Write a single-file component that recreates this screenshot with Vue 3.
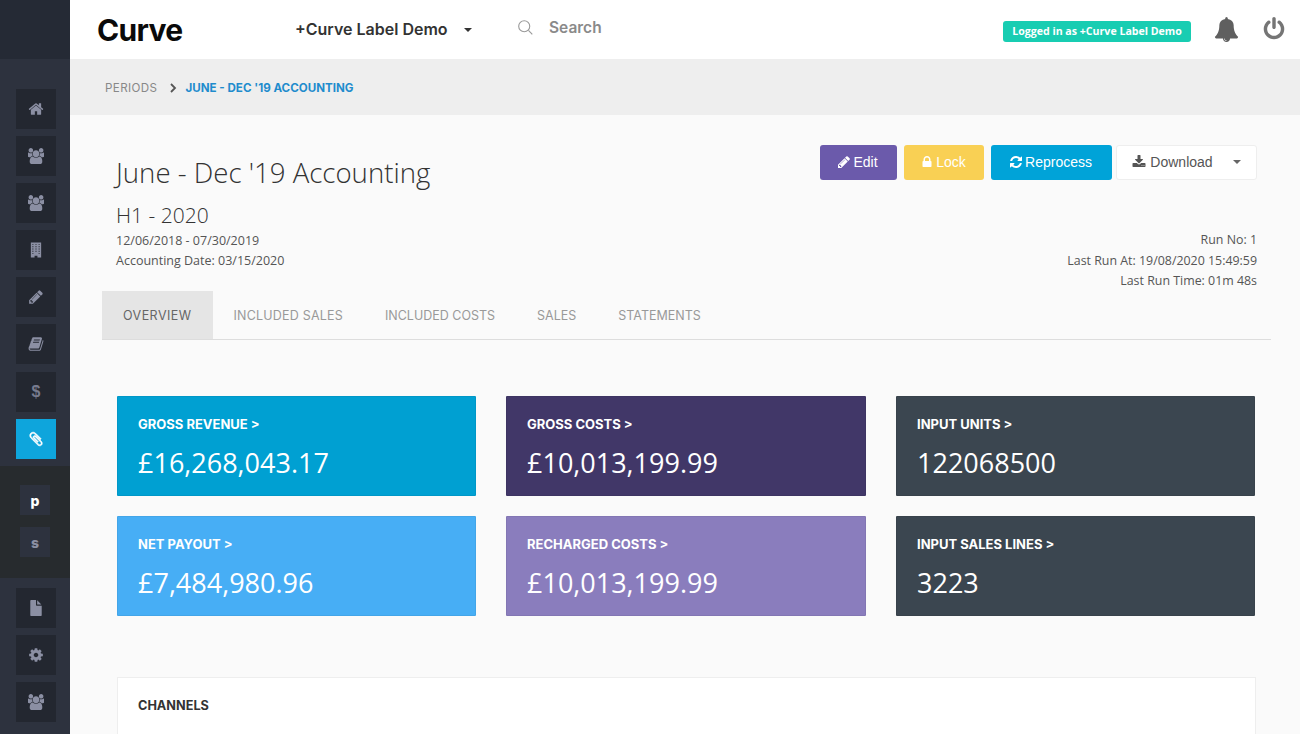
<script setup>
const icons = {
  home: 'M1472 992v480q0 26-19 45t-45 19h-384v-384h-256v384h-384q-26 0-45-19t-19-45v-480q0-1 .5-3t.5-3l575-474 575 474q1 2 1 6zm223-69l-62 74q-8 9-21 11h-3q-13 0-21-7l-692-577-692 577q-12 8-24 7-13-2-21-11l-62-74q-8-10-7-23.500t11-21.500l719-599q32-26 76-26t76 26l244 204v-195q0-14 9-23t23-9h192q14 0 23 9t9 23v408l219 182q10 8 11 21.500t-7 23.500z',
  users: 'M529 896q-162 5-265 128h-134q-82 0-138-40.500t-56-118.500q0-353 124-353 6 0 43.500 21t97.500 42.500 119 21.500q67 0 133-23-5 37-5 66 0 139 81 256zm1071 637q0 120-73 189.500t-194 69.500h-874q-121 0-194-69.500t-73-189.500q0-53 3.500-103.500t14-109 26.500-108.500 43-97.500 62-81 85.500-53.500 111.500-20q10 0 43 21.500t73 48 107 48 135 21.500 135-21.500 107-48 73-48 43-21.500q61 0 111.500 20t85.500 53.500 62 81 43 97.500 26.500 108.500 14 109 3.500 103.500zm-1024-1277q0 106-75 181t-181 75-181-75-75-181 75-181 181-75 181 75 75 181zm704 384q0 159-112.500 271.500t-271.500 112.500-271.500-112.500-112.500-271.500 112.500-271.500 271.500-112.500 271.500 112.500 112.500 271.500zm576 225q0 78-56 118.500t-138 40.500h-134q-103-123-265-128 81-117 81-256 0-29-5-66 66 23 133 23 59 0 119-21.500t97.500-42.500 43.500-21q124 0 124 353zm-128-609q0 106-75 181t-181 75-181-75-75-181 75-181 181-75 181 75 75 181z',
  building: 'M320 64h1152v1664h-416v-192h-320v192h-416zM480 224v96h128v-96zM832 224v96h128v-96zM1184 224v96h128v-96zM480 480v96h128v-96zM832 480v96h128v-96zM1184 480v96h128v-96zM480 736v96h128v-96zM832 736v96h128v-96zM1184 736v96h128v-96zM480 992v96h128v-96zM832 992v96h128v-96zM1184 992v96h128v-96zM480 1248v96h128v-96zM1184 1248v96h128v-96z',
  pencil: 'M491 1536l91-91-235-235-91 91v107h128v128h107zm523-928q0-22-22-22-10 0-17 7l-542 542q-7 7-7 17 0 22 22 22 10 0 17-7l542-542q7-7 7-17zm-54-192l416 416-832 832h-416v-416zm683 96q0 53-37 90l-166 166-416-416 166-165q36-38 90-38 53 0 91 38l235 234q37 39 37 91z',
  book: 'M1703 478q40 57 18 129l-275 906q-19 64-76.500 107.500t-122.500 43.500h-923q-77 0-148.500-53.500t-99.500-131.500q-24-67-2-127 0-4 3-27t4-37q1-8-3-21.500t-3-19.500q2-11 8-21t16.500-23.500 16.500-23.500q23-38 45-91.500t30-91.500q3-10 .5-30t-.5-28q3-11 17-28t17-23q21-36 42-92t25-90q1-9-2.500-32t.5-28q4-13 22-30.500t22-22.500q19-26 42.500-84.500t27.500-96.500q1-8-3-25.500t-2-26.500q2-8 9-18t18-23 17-21q8-12 16.500-30.500t15-35 16-36 19.500-32 26.500-23.500 36-11.500 47.500 5.500l-1 3q38-9 51-9h761q74 0 114 56t18 130l-274 906q-36 119-71.500 153.500t-128.500 34.500h-869q-27 0-38 15-11 16-1 43 24 70 144 70h923q29 0 56-15.500t35-41.500l300-987q7-22 5-57 38 15 59 43zm-1064 2q-4 13 2 22.500t20 9.500h608q13 0 25.500-9.500t16.500-22.500l21-64q4-13-2-22.500t-20-9.500h-608q-13 0-25.500 9.500t-16.500 22.500zm-83 256q-4 13 2 22.500t20 9.500h608q13 0 25.500-9.500t16.500-22.500l21-64q4-13-2-22.500t-20-9.500h-608q-13 0-25.500 9.500t-16.500 22.500z',
  clip: 'M1596 1385q0 117-79 196t-196 79q-135 0-235-100l-777-776q-113-115-113-271 0-159 110-270t269-111q158 0 273 113l605 606q10 10 10 22 0 16-30.500 46.500t-46.500 30.500q-13 0-23-10l-606-607q-79-77-181-77-106 0-179 75t-73 181q0 105 76 181l776 777q63 63 145 63 64 0 106-42t42-106q0-82-63-145l-581-581q-26-24-60-24-29 0-48 19t-19 48q0 32 25 59l410 410q10 10 10 22 0 16-31 47t-47 31q-12 0-22-10l-410-410q-63-61-63-149 0-82 57-139t139-57q88 0 149 63l581 581q100 98 100 235z',
  file: 'M1468 476q14 14 28 36h-472v-472q22 14 36 28zm-476 164h544v1056q0 40-28 68t-68 28h-1088q-40 0-68-28t-28-68v-1600q0-40 28-68t68-28h544v544q0 40 28 68t68 28z',
  cog: 'M1152 896q0-106-75-181t-181-75-181 75-75 181 75 181 181 75 181-75 75-181zm512-109v222q0 12-8 23t-20 13l-185 28q-19 54-39 91 35 50 107 138 10 12 10 25t-9 23q-27 37-99 108t-94 71q-12 0-26-9l-138-108q-44 23-91 38-16 136-29 186-7 28-36 28h-222q-14 0-24.500-8.500t-11.500-21.500l-28-184q-49-16-90-37l-141 107q-10 9-25 9-14 0-25-11-126-114-165-168-7-10-7-23 0-12 8-23 15-21 51-66.500t54-70.500q-27-50-41-99l-183-27q-13-2-21-12.500t-8-23.500v-222q0-12 8-23t19-13l186-28q14-46 39-92-40-57-107-138-10-12-10-24 0-10 9-23 26-36 98.500-107.500t94.500-71.500q13 0 26 10l138 107q44-23 91-38 16-136 29-186 7-28 36-28h222q14 0 24.500 8.500t11.500 21.500l28 184q49 16 90 37l142-107q9-9 24-9 13 0 25 10 129 119 165 170 7 8 7 22 0 12-8 23-15 21-51 66.500t-54 70.500q26 50 41 98l183 28q13 2 21 12.500t8 23.500z',
  lock: 'M640 768h512v-192q0-106-75-181t-181-75-181 75-75 181v192zm832 96v576q0 40-28 68t-68 28h-960q-40 0-68-28t-28-68v-576q0-40 28-68t68-28h32v-192q0-184 132-316t316-132 316 132 132 316v192h32q40 0 68 28t28 68z',
  refresh: 'M1639 1056q0 5-1 7-64 268-268 434.500t-478 166.500q-146 0-282.500-55t-243.500-157l-129 129q-19 19-45 19t-45-19-19-45v-448q0-26 19-45t45-19h448q26 0 45 19t19 45-19 45l-137 137q71 66 161 102t187 36q134 0 250-65t186-179q11-17 53-117 8-23 30-23h192q13 0 22.500 9.500t9.500 22.500zm25-800v448q0 26-19 45t-45 19h-448q-26 0-45-19t-19-45 19-45l138-138q-148-137-349-137-134 0-250 65t-186 179q-11 17-53 117-8 23-30 23h-199q-13 0-22.500-9.500t-9.500-22.500v-7q65-268 270-434.500t480-166.500q146 0 284 55.500t245 156.500l130-129q19-19 45-19t45 19 19 45z',
  download: 'M1344 1344q0-26-19-45t-45-19-45 19-19 45 19 45 45 19 45-19 19-45zm256 0q0-26-19-45t-45-19-45 19-19 45 19 45 45 19 45-19 19-45zm128-224v320q0 40-28 68t-68 28h-1472q-40 0-68-28t-28-68v-320q0-40 28-68t68-28h465l135 136q58 56 136 56t136-56l136-136h464q40 0 68 28t28 68zm-325-569q17 41-14 70l-448 448q-18 19-45 19t-45-19l-448-448q-31-29-14-70 17-39 59-39h256v-448q0-26 19-45t45-19h256q26 0 45 19t19 45v448h256q42 0 59 39z',
  bell: 'M912 1696q0-16-16-16-59 0-101.500-42.500t-42.500-101.500q0-16-16-16t-16 16q0 73 51.500 124.500t124.500 51.500q16 0 16-16zm816-288q0 52-38 90t-90 38h-448q0 106-75 181t-181 75-181-75-75-181h-448q-52 0-90-38t-38-90q50-42 91-88t85-119.500 74.500-158.500 50-206 19.500-260q0-152 117-282.500t307-158.500q-8-19-8-39 0-40 28-68t68-28 68 28 28 68q0 20-8 39 190 28 307 158.500t117 282.500q0 139 19.500 260t50 206 74.500 158.500 85 119.500 91 88z',
  power: 'M1664 896q0 156-61 298t-164 245-245 164-298 61-298-61-245-164-164-245-61-298q0-182 80.500-343t226.500-270q43-32 95.500-25t83.500 50q32 42 24.500 94.500t-49.500 84.500q-98 74-151.500 181t-53.500 228q0 104 40.500 198.500t109.500 163.500 163.500 109.500 198.500 40.500 198.500-40.500 163.500-109.500 109.500-163.500 40.500-198.500q0-121-53.500-228t-151.500-181q-42-32-49.500-84.500t24.500-94.500q31-43 84-50t95 25q146 109 226.500 270t80.500 343zm-640-768v640q0 52-38 90t-90 38-90-38-38-90v-640q0-52 38-90t90-38 90 38 38 90z'
}

const navTop = ['home', 'users', 'users', 'building', 'pencil', 'book', 'dollar', 'clip']
const navBottom = ['file', 'cog', 'users']
const tabs = ['Overview', 'Included Sales', 'Included Costs', 'Sales', 'Statements']
const cards = [
  { label: 'GROSS REVENUE >', value: '£16,268,043.17', color: '#00a0d2' },
  { label: 'GROSS COSTS >', value: '£10,013,199.99', color: '#413768' },
  { label: 'INPUT UNITS >', value: '122068500', color: '#3b4650' },
  { label: 'NET PAYOUT >', value: '£7,484,980.96', color: '#47aef5' },
  { label: 'RECHARGED COSTS >', value: '£10,013,199.99', color: '#8a7dbd' },
  { label: 'INPUT SALES LINES >', value: '3223', color: '#3b4650' }
]
</script>

<template>
  <div class="app">
    <aside class="sidebar">
      <div class="side-top"></div>
      <nav class="nav nav-main">
        <a v-for="(item, i) in navTop" :key="i" class="nav-item" :class="{ active: item === 'clip' }">
          <span v-if="item === 'dollar'" class="dollar">$</span>
          <svg v-else class="nav-icon" viewBox="0 0 1792 1792"><path fill-rule="evenodd" :d="icons[item]" /></svg>
        </a>
      </nav>
      <div class="sub-nav">
        <a class="sub-item current">p</a>
        <a class="sub-item">s</a>
      </div>
      <nav class="nav nav-bottom">
        <a v-for="(item, i) in navBottom" :key="i" class="nav-item">
          <svg class="nav-icon" viewBox="0 0 1792 1792"><path :d="icons[item]" /></svg>
        </a>
      </nav>
    </aside>

    <div class="main">
      <header class="topbar">
        <div class="logo">Curve</div>
        <div class="label-select">+Curve Label Demo <span class="caret dark"></span></div>
        <div class="search">
          <svg viewBox="0 0 20 20" class="search-icon"><circle cx="8.500" cy="8.500" r="6.500" /><line x1="13.500" y1="13.500" x2="18" y2="18" /></svg>
          <span>Search</span>
        </div>
        <div class="top-right">
          <span class="badge">Logged in as +Curve Label Demo</span>
          <svg class="bell" viewBox="0 0 1792 1792"><path :d="icons.bell" /></svg>
          <svg class="power" viewBox="0 0 1792 1792"><path :d="icons.power" /></svg>
        </div>
      </header>

      <div class="crumbs">
        <span class="crumb">PERIODS</span>
        <svg class="crumb-sep" viewBox="0 0 8 10"><path d="M2 1l4 4-4 4" /></svg>
        <span class="crumb current">JUNE - DEC '19 ACCOUNTING</span>
      </div>

      <main class="content">
        <section class="head">
          <div class="head-left">
            <h1>June - Dec '19 Accounting</h1>
            <h2>H1 - 2020</h2>
            <p>12/06/2018 - 07/30/2019</p>
            <p>Accounting Date: 03/15/2020</p>
          </div>
          <div class="head-right">
            <div class="actions">
              <button class="btn edit"><svg viewBox="0 0 1792 1792"><path :d="icons.pencil" /></svg> Edit</button>
              <button class="btn lock"><svg viewBox="0 0 1792 1792"><path :d="icons.lock" /></svg> Lock</button>
              <button class="btn reprocess"><svg viewBox="0 0 1792 1792"><path :d="icons.refresh" /></svg> Reprocess</button>
              <button class="btn download"><svg viewBox="0 0 1792 1792"><path :d="icons.download" /></svg> Download <span class="caret"></span></button>
            </div>
            <div class="run-info">
              <p>Run No: 1</p>
              <p>Last Run At: 19/08/2020 15:49:59</p>
              <p>Last Run Time: 01m 48s</p>
            </div>
          </div>
        </section>

        <div class="tabs">
          <a v-for="(tab, i) in tabs" :key="tab" class="tab" :class="{ active: i === 0 }">{{ tab }}</a>
        </div>

        <section class="cards">
          <div v-for="card in cards" :key="card.label" class="card" :style="{ background: card.color }">
            <div class="card-label">{{ card.label }}</div>
            <div class="card-value">{{ card.value }}</div>
          </div>
        </section>

        <section class="channels">
          <h3>CHANNELS</h3>
        </section>
      </main>
    </div>
  </div>
</template>

<style scoped>
.app {
  display: flex;
  height: 734px;
  overflow: hidden;
  font-family: "Open Sans", sans-serif;
}

.sidebar {
  width: 70px;
  flex-shrink: 0;
  background: #2d323e;
  display: flex;
  flex-direction: column;
}

.side-top {
  height: 59px;
  background: #252a35;
}

.nav {
  display: flex;
  flex-direction: column;
  gap: 7px;
  padding-left: 16px;
}

.nav-main {
  padding-top: 30px;
  padding-bottom: 7px;
}

.nav-main .nav-item:nth-child(7) {
  margin-top: 1px;
}

.nav-bottom {
  padding-top: 10px;
}

.nav-item {
  width: 40px;
  height: 40px;
  background: #232730;
  display: flex;
  align-items: center;
  justify-content: center;
}

.nav-item.active {
  background: #0ea5dc;
}

.nav-icon {
  width: 16px;
  height: 16px;
  fill: #8b8fa3;
}

.nav-item.active .nav-icon {
  fill: #fff;
  stroke: #fff;
  stroke-width: 70;
}

.dollar {
  color: #777b8e;
  font-family: "Liberation Sans", sans-serif;
  font-size: 16px;
  font-weight: 700;
}

.sub-nav {
  height: 112px;
  background: #272b2e;
  display: flex;
  flex-direction: column;
  gap: 12px;
  padding: 19px 0 0 20px;
  box-sizing: border-box;
}

.sub-item {
  width: 30px;
  height: 30px;
  background: #2d323e;
  color: #8b8fa3;
  font-family: "Inter", sans-serif;
  font-size: 14px;
  font-weight: 800;
  display: flex;
  align-items: center;
  justify-content: center;
}

.sub-item.current {
  color: #fff;
}

.main {
  flex: 1;
  min-width: 0;
  display: flex;
  flex-direction: column;
  background: #fafafa;
}

.topbar {
  height: 59px;
  flex-shrink: 0;
  background: #fff;
  display: flex;
  align-items: center;
  padding: 0 14px 0 27px;
  box-sizing: border-box;
}

.logo {
  width: 198px;
  font-family: "Inter", sans-serif;
  font-size: 30px;
  font-weight: 700;
  letter-spacing: -0.7px;
  color: #0a0a0a;
}

.label-select {
  width: 222px;
  padding-bottom: 2px;
  font-family: "Inter", sans-serif;
  font-size: 16px;
  font-weight: 600;
  color: #333;
}

.caret {
  display: inline-block;
  width: 0;
  height: 0;
  border-left: 4px solid transparent;
  border-right: 4px solid transparent;
  border-top: 4px solid #666;
  margin-left: 12px;
  vertical-align: middle;
}

.caret.dark {
  border-top-color: #333;
}

.search {
  display: flex;
  align-items: center;
  gap: 15px;
  padding-bottom: 4px;
  color: #8a8a8a;
  font-family: "Inter", sans-serif;
  font-size: 15.500px;
  font-weight: 600;
}

.search-icon {
  width: 17px;
  height: 17px;
  fill: none;
  stroke: #999;
  stroke-width: 1.300;
}

.top-right {
  margin-left: auto;
  display: flex;
  align-items: center;
}

.badge {
  background: #18cdb2;
  color: #fff;
  font-family: "Open Sans", sans-serif;
  font-size: 10.600px;
  font-weight: 700;
  height: 21px;
  line-height: 21px;
  width: 188px;
  text-align: center;
  border-radius: 3px;
  margin-top: 3px;
}

.bell {
  width: 25px;
  height: 25px;
  fill: #5f5f5f;
  margin-left: 23px;
}

.power {
  width: 24px;
  height: 24px;
  fill: #757575;
  margin-left: 23px;
  margin-bottom: 2px;
}

.crumbs {
  height: 56px;
  flex-shrink: 0;
  background: #eee;
  display: flex;
  align-items: center;
  padding: 2px 0 0 35px;
  box-sizing: border-box;
  font-family: "Inter", sans-serif;
  font-size: 11.600px;
}

.crumb {
  color: #888;
  font-weight: 400;
  letter-spacing: 0.4px;
}

.crumb.current {
  color: #1f8ccd;
  font-weight: 700;
  letter-spacing: 0;
}

.crumb-sep {
  width: 8px;
  height: 10px;
  margin: 0 8px 0 12px;
  fill: none;
  stroke: #555;
  stroke-width: 1.800;
}

.content {
  flex: 1;
  min-height: 0;
  padding: 0 29px 0 32px;
}

.head {
  display: flex;
  justify-content: space-between;
  height: 176px;
  box-sizing: border-box;
  padding: 30px 14px 0 13px;
}

.head-left {
  padding-left: 1px;
}

h1 {
  margin: 7px 0 0;
  font-size: 27.600px;
  font-weight: 300;
  line-height: 40px;
  color: #333;
}

h2 {
  margin: 9px 0 0;
  font-size: 21px;
  font-weight: 300;
  line-height: 28px;
  color: #333;
}

.head-left p {
  margin: 0;
  font-size: 12.500px;
  line-height: 20px;
  color: #555;
}

.head-left h2 + p {
  margin-top: 2px;
}

.head-right {
  display: flex;
  flex-direction: column;
  align-items: flex-end;
}

.actions {
  display: flex;
  gap: 7px;
}

.btn {
  height: 35px;
  border: none;
  border-radius: 3px;
  color: #fff;
  font-family: "Liberation Sans", sans-serif;
  font-size: 14px;
  padding: 0 2px 2px 0;
  display: flex;
  align-items: center;
  justify-content: center;
  gap: 2px;
}

.btn svg {
  width: 14px;
  height: 14px;
  fill: currentColor;
}

.edit {
  width: 77px;
  background: #6b5aab;
}

.lock {
  width: 80px;
  background: #f9d054;
}

.reprocess {
  width: 121px;
  background: #00a3d8;
}

.download {
  width: 141px;
  margin-left: -3px;
  padding-right: 0;
  gap: 4px;
  background: #fff;
  color: #555;
  border: 1px solid #eee;
  box-sizing: border-box;
}

.download .caret {
  margin-left: 16px;
}

.run-info {
  margin-top: 50px;
  text-align: right;
  font-size: 12.400px;
  line-height: 20.500px;
  color: #555;
}

.run-info p {
  margin: 0;
}

.tabs {
  display: flex;
  height: 48px;
  border-bottom: 1px solid #ddd;
}

.tab {
  padding: 1px 21px 0;
  line-height: 47px;
  font-family: "Inter", sans-serif;
  font-size: 12.500px;
  color: #999;
  text-transform: uppercase;
}

.tab.active {
  background: #e5e5e5;
  color: #666;
  letter-spacing: 0.45px;
}

.tab:nth-child(2) {
  letter-spacing: 0.2px;
}

.cards {
  display: grid;
  grid-template-columns: 359px 360px 359px;
  grid-auto-rows: 100px;
  gap: 20px 30px;
  margin: 56px 0 0 15px;
}

.card {
  padding: 19px 20px 0;
  box-sizing: border-box;
  border: 1px solid rgba(0, 0, 0, 0.05);
  border-radius: 1px;
  color: #fff;
}

.card-label {
  font-family: "Inter", sans-serif;
  font-size: 13px;
  font-weight: 700;
  line-height: 16px;
}

.card-value {
  margin-top: 12px;
  font-size: 27px;
  line-height: 38px;
}

.channels {
  margin: 61px 0 0 15px;
  width: 1139px;
  height: 120px;
  box-sizing: border-box;
  background: #fff;
  border: 1px solid #eee;
  padding: 20px;
}

h3 {
  margin: 0;
  font-family: "Inter", sans-serif;
  font-size: 12.700px;
  font-weight: 700;
  color: #333;
}
</style>

<style>
html, body {
  margin: 0;
  overflow: hidden;
}
</style>
